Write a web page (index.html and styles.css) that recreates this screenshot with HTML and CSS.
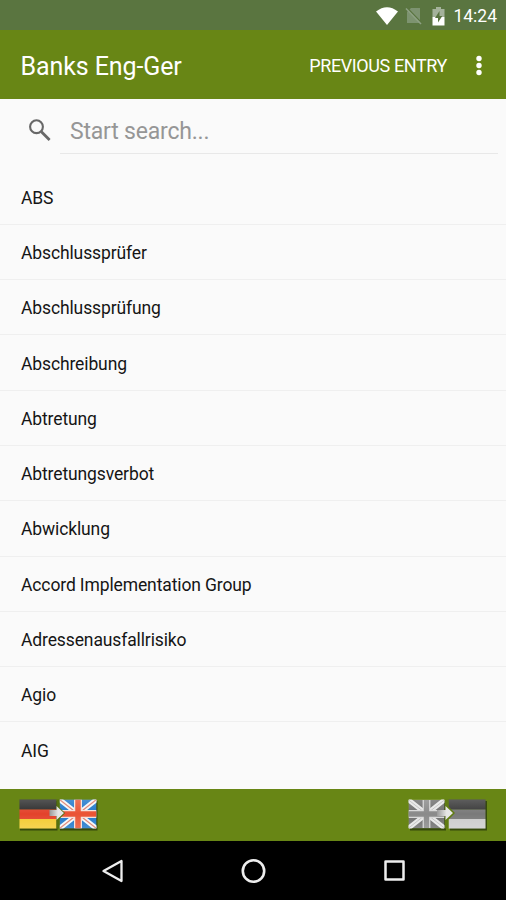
FILE: index.html
```
<!DOCTYPE html>
<html lang="en">
<head>
    <meta charset="UTF-8">
    <title>Banks Eng-Ger</title>
    <link rel="stylesheet" href="styles.css">
</head>
<body>
    <div class="app">
        <div class="status-bar">
            <svg class="wifi" width="22" height="18" viewBox="0 0 22 18">
                <path d="M0 4.5Q11-4 22 4.5L11 18Z" fill="#fff"/>
            </svg>
            <svg class="no-sim" width="17" height="18" viewBox="0 0 17 18">
                <path d="M6 1h9v15H2V5Z" fill="#7d9370"/>
                <path d="M2.2 1l14 14.5" stroke="#5a7540" stroke-width="1.5"/>
                <path d="M1 1.5l15 15.5" stroke="#8ea184" stroke-width="1.5"/>
            </svg>
            <svg class="battery" width="13" height="19" viewBox="0 0 13 19">
                <path d="M4 0h5v2h3.5v8H.5V2H4Z" fill="#a4b29b"/>
                <path d="M.5 10h12v8.5H.5Z" fill="#fff"/>
                <path d="M7.5 4L3 11h3v4.5L10.3 9H7.5Z" fill="#58733f"/>
            </svg>
            <span class="clock">14:24</span>
        </div>

        <div class="toolbar">
            <h1>Banks Eng-Ger</h1>
            <span class="previous">PREVIOUS ENTRY</span>
            <svg class="more" width="8" height="22" viewBox="0 0 8 22">
                <g fill="#fff">
                    <circle cx="4" cy="3.5" r="2.7"/>
                    <circle cx="4" cy="10.5" r="2.7"/>
                    <circle cx="4" cy="17.5" r="2.7"/>
                </g>
            </svg>
        </div>

        <div class="search">
            <svg class="search-icon" width="23" height="23" viewBox="0 0 23 23" fill="none" stroke="#686868">
                <circle cx="7.5" cy="7.7" r="6.4" stroke-width="2.1"/>
                <path d="M12.4 12.7l8.2 8.2" stroke-width="2.8"/>
            </svg>
            <div class="search-field">Start search...</div>
        </div>

        <ul class="entries">
            <li><span>ABS</span></li>
            <li><span>Abschlussprüfer</span></li>
            <li><span>Abschlussprüfung</span></li>
            <li><span>Abschreibung</span></li>
            <li><span>Abtretung</span></li>
            <li><span>Abtretungsverbot</span></li>
            <li><span>Abwicklung</span></li>
            <li><span>Accord Implementation Group</span></li>
            <li><span>Adressenausfallrisiko</span></li>
            <li><span>Agio</span></li>
            <li><span>AIG</span></li>
        </ul>

        <div class="language-bar">
            <!-- German to English, active -->
            <svg width="80" height="32" viewBox="0 0 80 32">
                <defs>
                    <linearGradient id="shine" x1="0" y1="0" x2="0" y2="1">
                        <stop offset="0" stop-color="#fff" stop-opacity=".22"/>
                        <stop offset=".5" stop-color="#fff" stop-opacity=".04"/>
                        <stop offset="1" stop-color="#fff" stop-opacity=".2"/>
                    </linearGradient>
                    <linearGradient id="arrow" x1="0" y1="0" x2="1" y2="0">
                        <stop offset="0" stop-color="#999"/>
                        <stop offset=".6" stop-color="#e6e6e6"/>
                    </linearGradient>
                </defs>
                <path d="M2 2h37.5v29.5H2zM42 2h37.5v29.5H42z" fill="#26360a" opacity=".75"/>
                <path d="M1.5.5h37v10h-37z" fill="#242424"/>
                <path d="M1.5 10.5h37v9.5h-37z" fill="#e23a22"/>
                <path d="M1.5 20h37v9.5h-37z" fill="#f4c927"/>
                <svg x="41.5" y=".5" width="37" height="29" viewBox="0 0 37 29">
                    <path d="M0 0h37v29H0z" fill="#1672c8"/>
                    <path d="M0 0l37 29M37 0L0 29" stroke="#f3f6f8" stroke-width="5"/>
                    <path d="M0 0l37 29M37 0L0 29" stroke="#df7966" stroke-width="1.2"/>
                    <path d="M18.5 0v29M0 14.5h37" stroke="#f3dfd8" stroke-width="8"/>
                    <path d="M18.5 0v29M0 14.5h37" stroke="#e94c2b" stroke-width="5.5"/>
                </svg>
                <path d="M1.5.5h37v29h-37zM41.5.5h37v29h-37z" fill="url(#shine)"/>
                <path d="M38.5.5h3v8l5.5 5.5-5.5 6v9.5h-3z" fill="#55700f"/>
                <path d="M31.5 11h7V7l7.5 7-7.5 7v-4h-7z" fill="url(#arrow)"/>
            </svg>
            <!-- English to German, greyed out -->
            <svg width="80" height="32" viewBox="0 0 80 32">
                <path d="M2 2h36v29.5H2zM42 2h37v29.5H42z" fill="#26360a" opacity=".75"/>
                <svg x=".5" y=".5" width="36" height="29" viewBox="0 0 37 29">
                    <path d="M0 0h37v29H0z" fill="#696969"/>
                    <path d="M0 0l37 29M37 0L0 29" stroke="#e6e6e6" stroke-width="5"/>
                    <path d="M0 0l37 29M37 0L0 29" stroke="#bbb" stroke-width="1"/>
                    <path d="M18.5 0v29M0 14.5h37" stroke="#d6d6d6" stroke-width="8"/>
                    <path d="M18.5 0v29M0 14.5h37" stroke="#858585" stroke-width="5.5"/>
                </svg>
                <path d="M40.5.5h37v10h-37z" fill="#303030"/>
                <path d="M40.5 10.5h37V20h-37z" fill="#747474"/>
                <path d="M40.5 20h37v9.5h-37z" fill="#cacaca"/>
                <path d="M.5.5h36v29H.5zM40.5.5h37v29h-37z" fill="url(#shine)"/>
                <path d="M37 .5h3.5v7l6.5 6.5-6.5 6.5v9H37z" fill="#607c12"/>
                <path d="M29 11h8.5V7l7.5 7-7.5 7v-4H29z" fill="url(#arrow)"/>
            </svg>
        </div>

        <div class="nav-bar">
            <svg width="24" height="26" viewBox="0 0 24 26">
                <path d="M21.5 3v20L3.5 13Z" fill="none" stroke="#eee" stroke-width="2.3" stroke-linejoin="round"/>
            </svg>
            <svg width="26" height="26" viewBox="0 0 26 26">
                <circle cx="13.5" cy="13" r="10.7" fill="none" stroke="#eee" stroke-width="2.6"/>
            </svg>
            <svg width="24" height="26" viewBox="0 0 24 26">
                <path d="M3.5 3.5h18v18h-18Z" fill="none" stroke="#eee" stroke-width="2.5" stroke-linejoin="round"/>
            </svg>
        </div>
    </div>
</body>
</html>
```
FILE: styles.css
```
* {
    box-sizing: border-box;
}
body {
    margin: 0;
    font-family: Roboto, sans-serif;
    background-color: #fafafa;
}
svg {
    display: block;
    flex-shrink: 0;
}
.app {
    display: flex;
    flex-direction: column;
    height: 900px;
    overflow: hidden;
}
.status-bar {
    display: flex;
    align-items: center;
    justify-content: flex-end;
    height: 30px;
    padding: 2px 9px 0 0;
    background-color: #5a7540;
    color: #fff;
}
.no-sim {
    margin-left: 7px;
}
.battery {
    margin-left: 10px;
}
.clock {
    margin-left: 8px;
    font-size: 17.5px;
}
.toolbar {
    display: flex;
    align-items: center;
    height: 69px;
    padding: 2px 23px 0 20.5px;
    background-color: #688615;
    color: #fff;
}
.toolbar h1 {
    flex: 1;
    margin: 0;
    padding-top: 1px;
    font-size: 25px;
    font-weight: 400;
    letter-spacing: -0.1px;
}
.previous {
    font-size: 18px;
    letter-spacing: -0.4px;
}
.more {
    margin-left: 28px;
}
.search {
    display: flex;
    height: 70.5px;
    padding: 9px 8px 16px 29px;
}
.search-icon {
    margin-top: 11px;
}
.search-field {
    flex: 1;
    margin-left: 8px;
    padding: 1px 10px 0;
    border-bottom: 1px solid #e8e8e8;
    color: #969696;
    font-size: 23px;
    letter-spacing: -0.2px;
    line-height: 46px;
}
.entries {
    flex: 1;
    margin: 0;
    padding: 0;
    list-style: none;
    overflow: hidden;
}
.entries li {
    display: flex;
    align-items: center;
    height: 55.3px;
    padding: 2px 21px 0;
    border-bottom: 1px solid #efefef;
    color: #151515;
    font-size: 17.5px;
    letter-spacing: -0.12px;
}
.entries li:last-child {
    border-bottom-color: transparent;
}
.language-bar {
    display: flex;
    align-items: center;
    justify-content: space-between;
    height: 52px;
    padding: 0 18px;
    background-color: #688615;
}
.nav-bar {
    display: flex;
    align-items: center;
    justify-content: space-between;
    height: 59px;
    padding: 0 100px;
    background-color: #000;
}
```
